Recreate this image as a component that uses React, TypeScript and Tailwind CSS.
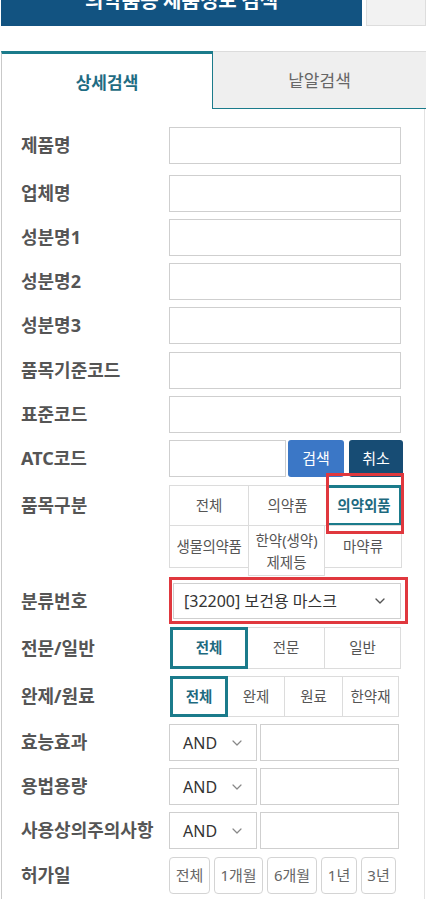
import { ChevronDown } from 'lucide-react';

/* ------------------------------------------------------------------ */
/*  Small building blocks                                              */
/* ------------------------------------------------------------------ */
const TEAL = 'border-[#1b7b8b]';

function Label({ children, h = 'h-[37px]' }: { children: React.ReactNode; h?: string }) {
  return (
    <div className={`w-[148px] shrink-0 flex items-center ${h} text-[18px] font-bold text-[#555]`}>
      {children}
    </div>
  );
}

function TextInput({ w = 'w-[232px]' }: { w?: string }) {
  return <div className={`${w} h-[37px] border border-[#cfcfcf] bg-white`} />;
}

function Segment({
  items,
  widths,
  h,
  active = 0,
}: {
  items: string[];
  widths: string[];
  h: string;
  active?: number;
}) {
  return (
    <div className="flex">
      {items.map((it, i) => (
        <div
          key={it}
          className={`${widths[i]} ${h} ${i > 0 ? '-ml-px' : ''} flex items-center justify-center text-[14.5px] border ${
            i === active
              ? `relative z-10 ${TEAL} shadow-[inset_0_0_0_2px_#1b7b8b] font-bold text-[#1e6a7f]`
              : 'border-[#dcdcdc] text-[#555]'
          }`}
        >
          {it}
        </div>
      ))}
    </div>
  );
}

function AndRow({ label }: { label: string }) {
  return (
    <div className="flex items-center mt-[7px]">
      <Label>{label}</Label>
      <div className="flex gap-[3px]">
        <div className="w-[88px] h-[37px] border border-[#cfcfcf] flex items-center pl-[13px] text-[16px] text-[#333]">
          <span>AND</span>
          <ChevronDown className="ml-[12px] h-[16px] w-[16px] text-[#888]" strokeWidth={1.8} />
        </div>
        <div className="w-[139px] h-[37px] border border-[#cfcfcf]" />
      </div>
    </div>
  );
}

/* ------------------------------------------------------------------ */
/*  Page                                                               */
/* ------------------------------------------------------------------ */
export default function App() {
  return (
    <div className="w-[426px] h-[899px] overflow-hidden bg-white font-['Noto_Sans','Noto_Sans_CJK_KR',sans-serif]">
      {/* Title strip (scrolled half out of view) */}
      <div className="flex -mt-[26px] h-[52px]">
        <div className="ml-px w-[361px] bg-[#125381] flex items-center justify-center text-white font-bold text-[20px] font-['Noto_Sans_CJK_KR',sans-serif]">
          의약품등 제품정보 검색
        </div>
        <div className="ml-[4px] flex-1 bg-[#f2f2f2] border border-[#dddddd]" />
      </div>

      {/* Tabs */}
      <div className="flex h-[58px] mt-[25px]">
        <div className="ml-px w-[212px] border-t-[3px] border-t-[#1b7b8b] border-l border-l-[#c9c9c9] border-r border-r-[#1b7b8b] bg-white flex items-center justify-center text-[17px] font-bold text-[#1f6c83] font-['Noto_Sans_CJK_KR',sans-serif]">
          상세검색
        </div>
        <div className="flex-1 bg-[#efefef] border-t border-t-[#dcdcdc] border-b border-b-[#1b7b8b] flex items-center justify-center text-[17px] text-[#666] font-['Noto_Sans_CJK_KR',sans-serif]">
          낱알검색
        </div>
      </div>

      {/* Form panel */}
      <div className="ml-px mr-px h-[800px] border-l border-l-[#c9c9c9] border-r border-r-[#e2e2e2] pl-[19px] pt-[18px] font-['Noto_Sans','Noto_Sans_CJK_KR',sans-serif]">
        <div className="flex items-center">
          <Label>제품명</Label>
          <TextInput />
        </div>
        <div className="flex items-center mt-[11px]">
          <Label>업체명</Label>
          <TextInput />
        </div>
        <div className="flex items-center mt-[7px]">
          <Label>성분명1</Label>
          <TextInput />
        </div>
        <div className="flex items-center mt-[7px]">
          <Label>성분명2</Label>
          <TextInput />
        </div>
        <div className="flex items-center mt-[7px]">
          <Label>성분명3</Label>
          <TextInput />
        </div>
        <div className="flex items-center mt-[8px]">
          <Label>품목기준코드</Label>
          <TextInput />
        </div>
        <div className="flex items-center mt-[7px]">
          <Label>표준코드</Label>
          <TextInput />
        </div>
        <div className="flex items-center mt-[7px]">
          <Label>ATC코드</Label>
          <TextInput w="w-[117px]" />
          <button className="ml-[2px] w-[56px] h-[37px] rounded-[3px] bg-[#3b77c6] text-white text-[15px]">
            검색
          </button>
          <button className="ml-[5px] w-[54px] h-[37px] rounded-[3px] bg-[#174c74] text-white text-[15px]">
            취소
          </button>
        </div>

        {/* 품목구분 */}
        <div className="flex items-start mt-[8px]">
          <Label h="h-[41px]">품목구분</Label>
          <div className="relative">
            <div className="flex">
              <div className="w-[80px] h-[41px] border border-[#dcdcdc] flex items-center justify-center text-[14.5px] text-[#555]">
                전체
              </div>
              <div className="-ml-px w-[79px] h-[41px] border border-[#dcdcdc] flex items-center justify-center text-[14.5px] text-[#555]">
                의약품
              </div>
              <div className="-ml-px w-[76px] h-[41px] border border-[#1b7b8b] shadow-[inset_0_0_0_2px_#1b7b8b] flex items-center justify-center text-[14.5px] font-bold text-[#1e6a7f]">
                의약외품
              </div>
            </div>
            <div className="flex items-start -mt-px">
              <div className="w-[80px] h-[43px] border border-[#dcdcdc] flex items-center justify-center text-[14.5px] text-[#555] tracking-[-0.3px]">
                생물의약품
              </div>
              <div className="-ml-px w-[77px] h-[51px] border border-[#dcdcdc] flex items-center justify-center text-center text-[14.5px] leading-[22px] text-[#555]">
                한약(생약)
                <br />
                제제등
              </div>
              <div className="-ml-px w-[78px] h-[43px] border border-[#dcdcdc] flex items-center justify-center text-[14.5px] text-[#555]">
                마약류
              </div>
            </div>
            {/* annotation box */}
            <div className="absolute left-[157px] top-[-12px] w-[78px] h-[61px] border-[3px] border-[#e0383e]" />
          </div>
        </div>

        {/* 분류번호 */}
        <div className="flex items-center mt-[7px]">
          <Label h="h-[36px]">분류번호</Label>
          <div className="relative">
            <div className="ml-[4px] w-[228px] h-[36px] border border-[#cfcfcf] flex items-center pl-[10px] pr-[12px] text-[16px] text-[#333]">
              <span className="flex-1">[32200] 보건용 마스크</span>
              <ChevronDown className="h-[16px] w-[16px] text-[#555]" strokeWidth={2} />
            </div>
            <div className="absolute left-0 top-[-6px] w-[239px] h-[47px] border-[3px] border-[#e0383e]" />
          </div>
        </div>

        {/* 전문/일반 */}
        <div className="flex items-center mt-[8px]">
          <Label h="h-[42px]">전문/일반</Label>
          <div className="ml-px">
            <Segment items={['전체', '전문', '일반']} widths={['w-[78px]', 'w-[78px]', 'w-[77px]']} h="h-[42px]" />
          </div>
        </div>

        {/* 완제/원료 */}
        <div className="flex items-center mt-[7px]">
          <Label h="h-[41px]">완제/원료</Label>
          <div className="ml-px">
            <Segment
              items={['전체', '완제', '원료', '한약재']}
              widths={['w-[58px]', 'w-[58px]', 'w-[59px]', 'w-[57px]']}
              h="h-[41px]"
            />
          </div>
        </div>

        <AndRow label="효능효과" />
        <AndRow label="용법용량" />
        <AndRow label="사용상의주의사항" />

        {/* 허가일 */}
        <div className="flex items-center mt-[8px]">
          <Label>허가일</Label>
          <div className="flex gap-[4px] text-[15px] text-[#666]">
            <div className="w-[41px] h-[37px] rounded-[4px] border border-[#d4d4d4] flex items-center justify-center">전체</div>
            <div className="w-[49px] h-[37px] rounded-[4px] border border-[#d4d4d4] flex items-center justify-center">1개월</div>
            <div className="w-[50px] h-[37px] rounded-[4px] border border-[#d4d4d4] flex items-center justify-center">6개월</div>
            <div className="w-[36px] h-[37px] rounded-[4px] border border-[#d4d4d4] flex items-center justify-center">1년</div>
            <div className="w-[35px] h-[37px] rounded-[4px] border border-[#d4d4d4] flex items-center justify-center">3년</div>
          </div>
        </div>
      </div>
    </div>
  );
}
